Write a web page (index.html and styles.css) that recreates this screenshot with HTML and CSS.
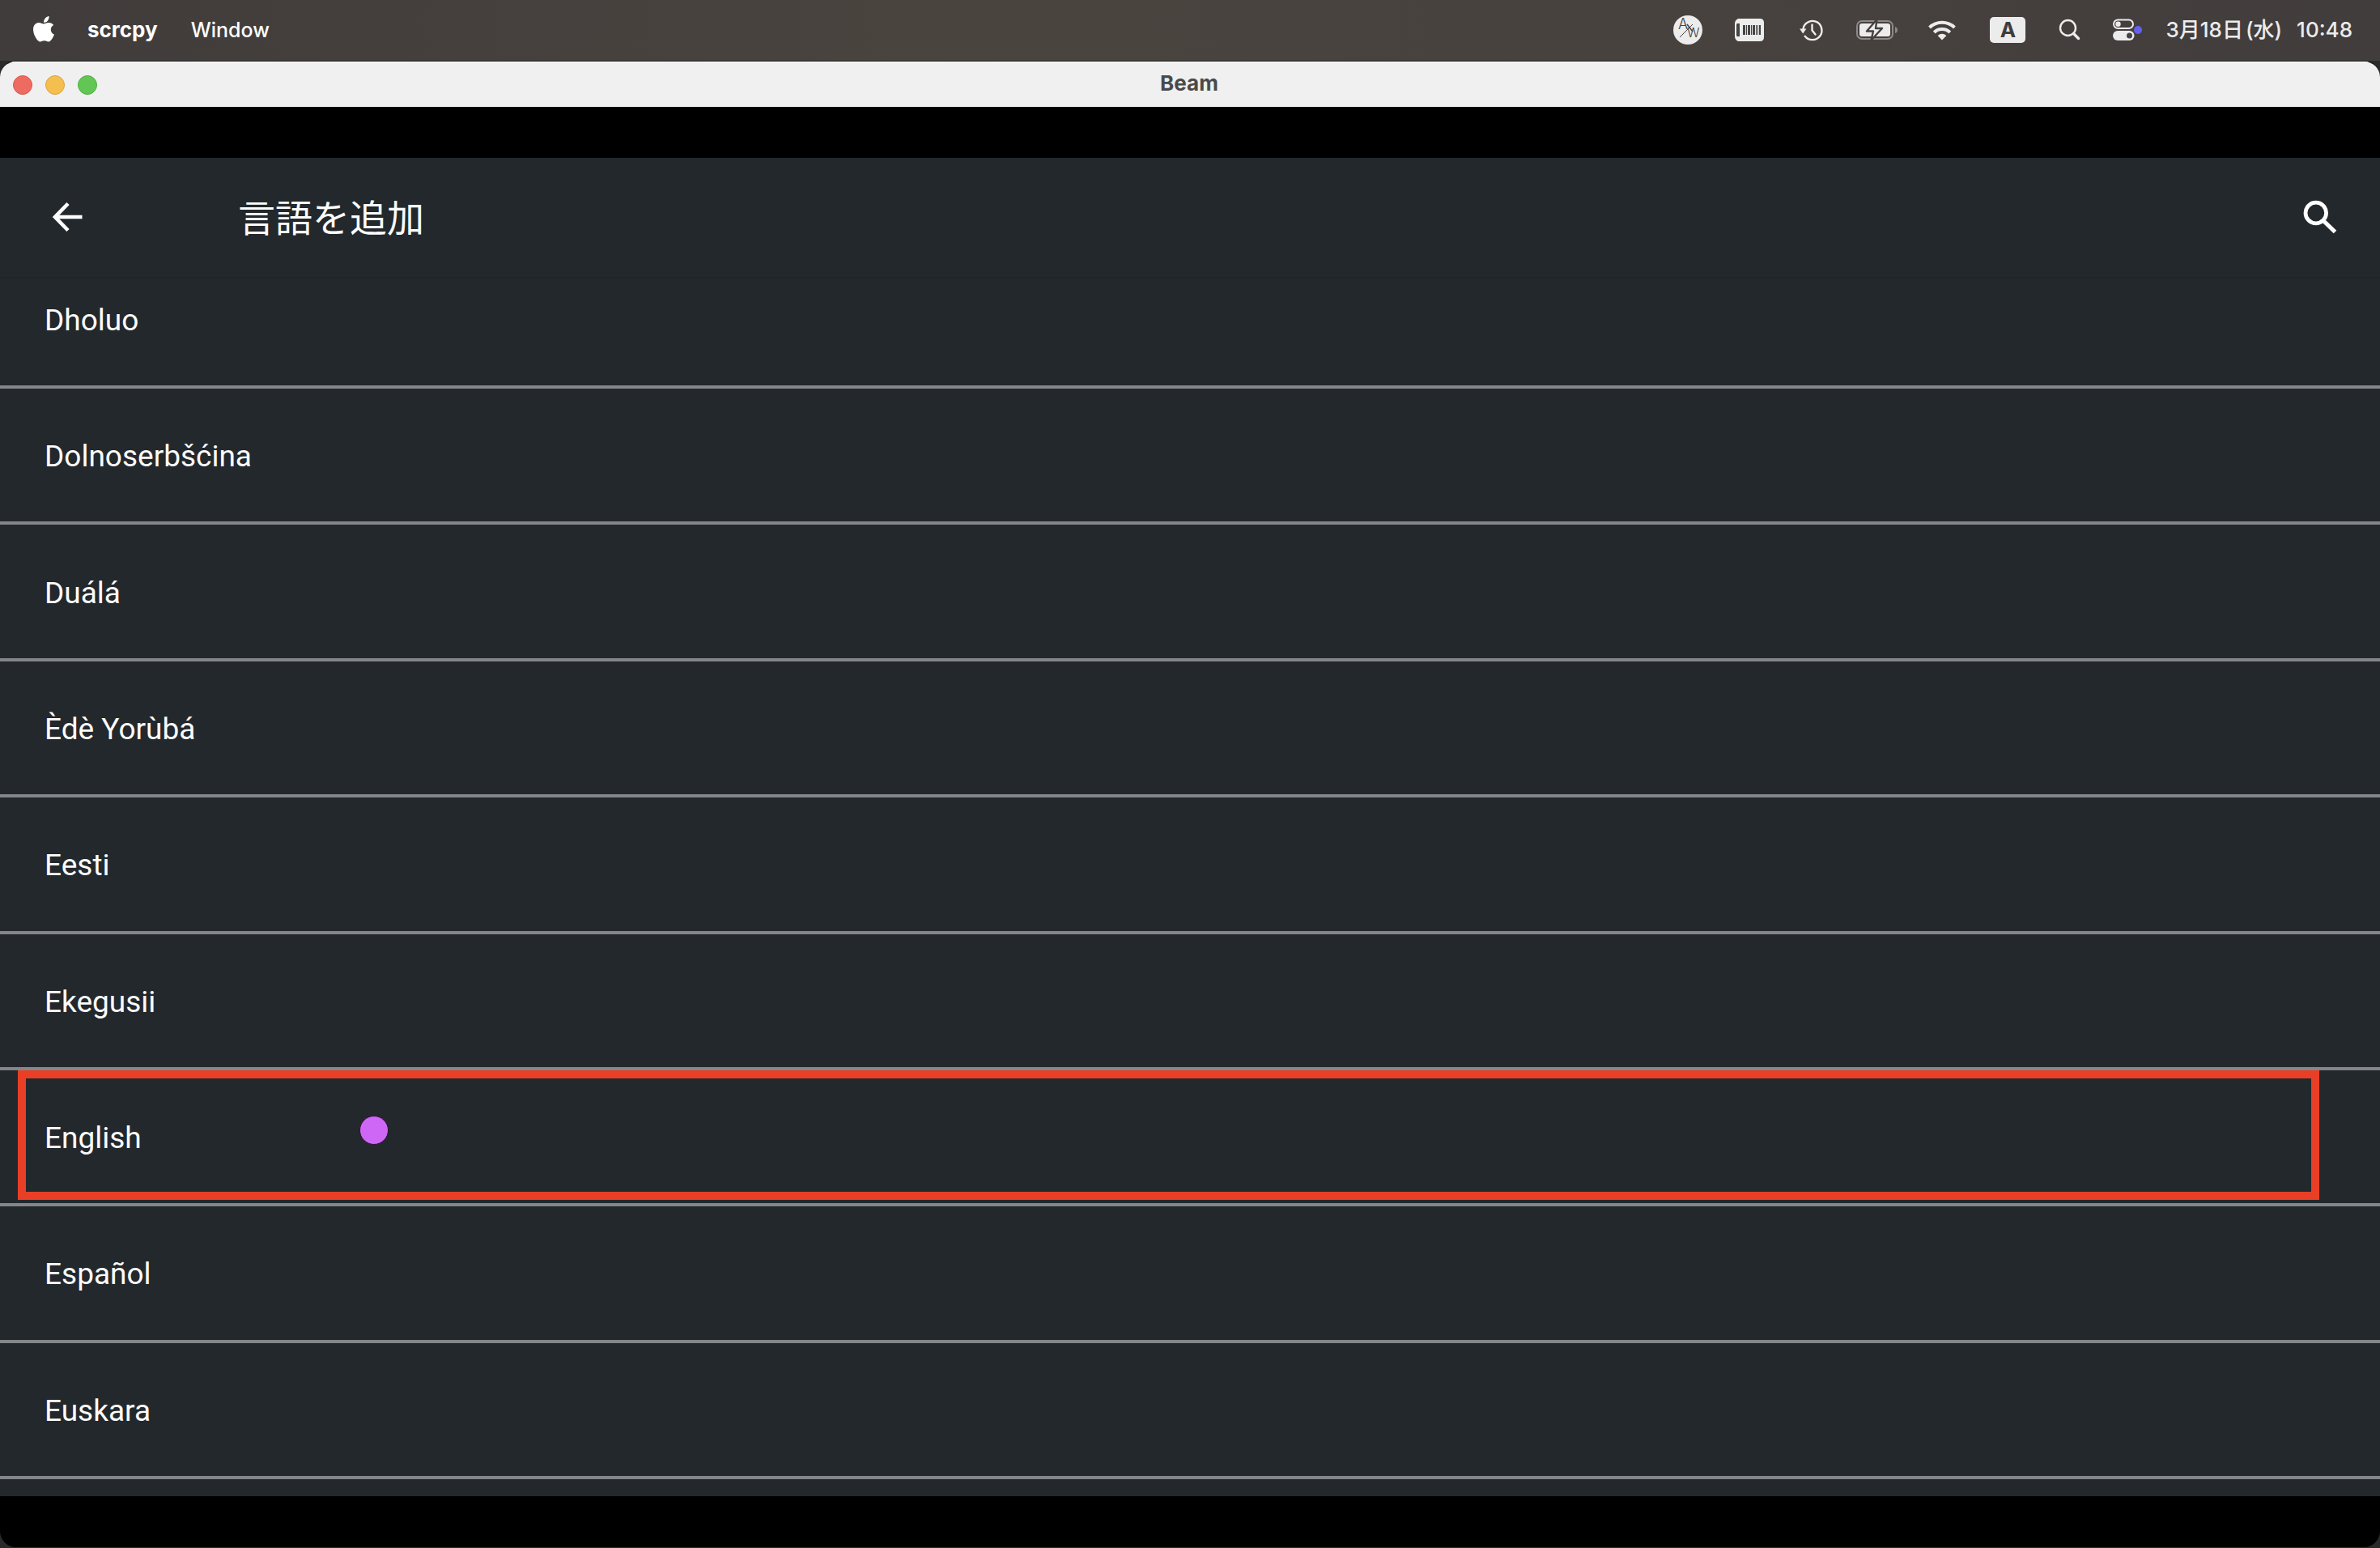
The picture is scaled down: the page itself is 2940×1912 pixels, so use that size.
FILE: index.html
```html
<!DOCTYPE html>
<html lang="ja">
<head>
<meta charset="utf-8">
<title>Beam</title>
<link rel="stylesheet" href="styles.css">
</head>
<body>
<div class="desktop">
  <header class="menubar">
    <nav class="menus">
      <button class="menu apple" aria-label="Apple">
        <svg width="26" height="32" viewBox="0 0 26 32"><path d="M19.6 0C19.8 2.200 19 4.200 17.800 5.700C16.500 7.200 14.700 8 13 7.800C12.800 5.800 13.700 3.900 14.900 2.500C16.200 1.100 18 .200 19.600 0ZM25.200 11C22.900 12.300 21.700 14.300 21.800 16.700C21.900 19.400 23.400 21.500 26 22.600C25.400 24.500 24.500 26.300 23.300 28C22 29.900 20.700 31.400 18.700 31.400C16.800 31.400 16.200 30.300 13.700 30.300C11.200 30.300 10.500 31.400 8.700 31.400C6.700 31.400 5.200 29.700 3.900 27.700C1.300 24 0 19.800 0 16.300C0 11 3.400 8 7 8C9.400 8 11.300 9.500 12.800 9.500C14.200 9.500 16.400 7.900 19.100 7.900C21.600 7.900 23.900 9.100 25.200 11Z" fill="#fff"/></svg>
      </button>
      <button class="menu app-name">scrcpy</button>
      <button class="menu">Window</button>
    </nav>
    <div class="status">
      <svg width="36" height="36" viewBox="0 0 36 36"><circle cx="18" cy="18" r="18" fill="#ececec"/><path d="M8 27L24 11" stroke="#444" stroke-width="1"/><path d="M17 11L24 20" stroke="#444" stroke-width="1.500"/><text x="6" y="17" class="glyph-thin">A</text><text x="17" y="27" class="glyph-thin glyph-w">W</text></svg>
      <svg width="44" height="28" viewBox="0 0 44 28"><path d="M8 0H35Q40 0 40 5V23Q40 28 35 28H8Q4 26 4 22V6Q4 2 8 0Z" fill="#ececec"/><path d="M7 6H10V22H7Q6 22 6 20V8Q6 6 7 6Z" fill="#444"/><path d="M14 8h3v12h-3zM18 8h1v12h-1zM20 8h3v12h-3zM24 8h1v12h-1zM26 8h3v12h-3zM30 8h1v12h-1zM32 8h1v12h-1zM34 8h2v12h-2z" fill="#444"/></svg>
      <svg width="36" height="28" viewBox="0 0 36 28"><g fill="none" stroke="#ececec" stroke-width="2.400" stroke-linecap="round" stroke-linejoin="round"><path d="M8.300 13.500A11.600 11.600 0 1 1 10.700 21.700"/><path d="M19.500 7.500V14.500L23.500 19.500"/></g><path d="M4 12.500H12.400L8.200 18.500Z" fill="#ececec"/></svg>
      <svg width="54" height="28" viewBox="0 0 54 28"><rect x="3" y="3" width="44" height="22" rx="6" fill="none" stroke="#8d8987" stroke-width="2"/><path d="M50 10Q53 11 53 14T50 18Z" fill="#8d8987"/><rect x="6" y="6" width="38" height="16" rx="3" fill="#ececec"/><path d="M27.500 1L15 15.500H23L20.500 26.500L34 12H26Z" fill="#ececec" stroke="#46413e" stroke-width="2.400" stroke-linejoin="round"/></svg>
      <svg width="36" height="28" viewBox="0 0 36 28"><g fill="none" stroke="#ececec" stroke-width="4"><path d="M2.500 11A22.500 22.500 0 0 1 33.500 11"/><path d="M8.200 17A14.200 14.200 0 0 1 27.800 17"/></g><path d="M18 26.500L12.600 21Q18 16.500 23.400 21Z" fill="#ececec"/></svg>
      <span class="input-source">A</span>
      <svg width="28" height="28" viewBox="0 0 28 28"><g fill="none" stroke="#ececec" stroke-linecap="round"><circle cx="11.500" cy="11.500" r="9.500" stroke-width="2.400"/><path d="M18.500 18.500L24.500 24.500" stroke-width="3.400"/></g></svg>
      <svg width="40" height="28" viewBox="0 0 40 28"><rect x="4" y="1.500" width="24" height="10.500" rx="5.250" fill="none" stroke="#ececec" stroke-width="2"/><circle cx="9.500" cy="6.800" r="3.200" fill="#ececec"/><rect x="3" y="15" width="26.500" height="12" rx="6" fill="#ececec"/><circle cx="23.500" cy="21" r="3.500" fill="#444"/><circle cx="34" cy="14" r="5" fill="#6361ec"/></svg>
      <time class="clock"><span>3月18日<span class="weekday">(水)</span></span><span>10:48</span></time>
    </div>
  </header>
  <main class="window">
    <div class="titlebar">
      <div class="lights">
        <button class="light close" aria-label="Close"></button>
        <button class="light minimize" aria-label="Minimize"></button>
        <button class="light zoom" aria-label="Zoom"></button>
      </div>
      <h1 class="window-title">Beam</h1>
    </div>
    <section class="screen">
      <div class="appbar">
        <button class="icon-button" aria-label="戻る"><svg width="38" height="42" viewBox="0 0 38 42"><path d="M37.500 21H3M20 4.500L4 21L20 37.500" fill="none" stroke="#fff" stroke-width="4.600"/></svg></button>
        <h2 class="appbar-title">言語を追加</h2>
        <button class="icon-button" aria-label="検索"><svg width="42" height="42" viewBox="0 0 42 42"><circle cx="15.800" cy="16" r="12.800" fill="none" stroke="#fff" stroke-width="4.800"/><path d="M26 26.500L39.500 39.500" stroke="#fff" stroke-width="5.200"/></svg></button>
      </div>
      <ul class="languages">
        <li class="language clipped">Dholuo</li>
        <li class="language">Dolnoserbšćina</li>
        <li class="language">Duálá</li>
        <li class="language">Èdè Yorùbá</li>
        <li class="language">Eesti</li>
        <li class="language">Ekegusii</li>
        <li class="language">English<span class="highlight"></span><span class="pointer"></span></li>
        <li class="language">Español</li>
        <li class="language">Euskara</li>
      </ul>
    </section>
  </main>
</div>
</body>
</html>
```
FILE: styles.css
```css
* {
  box-sizing: border-box;
}

body {
  margin: 0;
  background: #2a2a2c;
}

button {
  margin: 0;
  padding: 0;
  border: 0;
  background: none;
  color: inherit;
  font: inherit;
}

svg {
  display: block;
  flex: none;
  overflow: visible;
}

.desktop {
  display: flex;
  flex-direction: column;
  min-height: 100vh;
}

.menubar {
  display: flex;
  justify-content: space-between;
  align-items: center;
  height: 75px;
  padding: 0 34px 2px 41px;
  background: linear-gradient(90deg, #403c3b, #4a443f 40%, #48423f 70%, #413d3c);
  color: #fff;
  font: 500 26px/32px Inter, "Noto Sans CJK JP", sans-serif;
}

.menus,
.status {
  display: flex;
  align-items: center;
}

.menus {
  gap: 41px;
}

.menu {
  font-size: 25px;
}

.apple {
  padding-bottom: 2px;
}

.app-name {
  font-size: 26px;
  font-weight: 700;
}

.status {
  gap: 36px;
  color: #ececec;
}

.glyph-thin {
  fill: #444;
  font: 300 18px Inter, sans-serif;
}

.glyph-w {
  font-size: 16px;
}

.input-source {
  width: 44px;
  margin: 0 5px;
  border-radius: 5px;
  background: #ececec;
  color: #403c3b;
  font-weight: 700;
  text-align: center;
}

.clock {
  display: flex;
  gap: 18px;
  margin-left: -8px;
}

.weekday {
  margin-left: 3px;
}

.window {
  display: flex;
  flex: 1;
  flex-direction: column;
  margin-bottom: 1px;
  overflow: hidden;
  border-top: 1px solid #1c1a1a;
  border-radius: 20px;
  background: #000;
}

.titlebar {
  display: grid;
  grid-template-columns: 1fr auto 1fr;
  align-items: center;
  height: 56px;
  padding: 0 18px 0 16px;
  border-top: 1px solid #fff;
  background: #f0f0f0;
}

.lights {
  display: flex;
  gap: 16px;
}

.light {
  width: 24px;
  height: 24px;
  border: 1px solid #d9564b;
  border-radius: 50%;
  background: #ed6b60;
}

.minimize {
  border-color: #d9a33c;
  background: #f5bf4f;
}

.zoom {
  border-color: #4fad3e;
  background: #62c655;
}

.window-title {
  margin: 0;
  padding-bottom: 3px;
  color: #4a4a4a;
  font: 700 26px/32px Inter, sans-serif;
}

.screen {
  display: flex;
  flex: 1;
  flex-direction: column;
  margin: 63px 0;
  background: #23282c;
  color: #fbfbfb;
}

.appbar {
  display: flex;
  align-items: center;
  height: 149px;
  padding: 0 53px 2px 64px;
  border-bottom: 2px solid #202427;
}

.appbar-title {
  flex: 1;
  margin: 0 0 0 192px;
  padding-top: 5px;
  font: 400 46px/64px Roboto, "Noto Sans CJK JP", sans-serif;
}

.languages {
  display: grid;
  flex: 1;
  grid-template-rows: 136px repeat(8, 1fr);
  margin: 0;
  padding: 0 0 21px;
  list-style: none;
  font: 400 37px/44px Roboto, sans-serif;
}

.language {
  position: relative;
  display: flex;
  align-items: center;
  padding: 4px 55px 0;
  border-bottom: 4px solid #84878a;
}

.clipped {
  padding-bottom: 32px;
}

.highlight {
  position: absolute;
  inset: 0 75px 4px 22px;
  border: 10px solid #e93f26;
}

.pointer {
  position: absolute;
  top: 56px;
  left: 444px;
  width: 36px;
  height: 36px;
  border: 1px solid #2b1535;
  border-radius: 50%;
  background: #cf67f6;
}
```
